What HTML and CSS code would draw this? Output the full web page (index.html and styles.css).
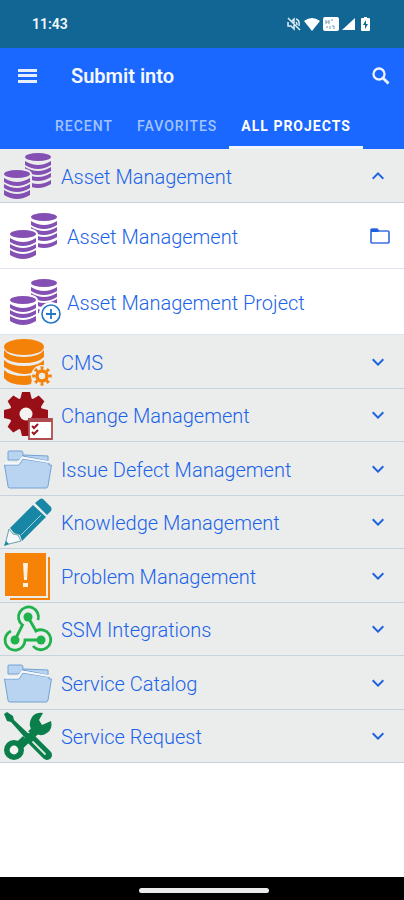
FILE: index.html
```html
<!DOCTYPE html>
<html lang="en">
<head>
<meta charset="utf-8">
<meta name="viewport" content="width=device-width, initial-scale=1">
<title>Submit into</title>
<link rel="stylesheet" href="styles.css">
</head>
<body>
<svg class="defs" width="0" height="0" aria-hidden="true">
  <symbol id="asset" viewBox="0 0 48 48" overflow="visible">
    <g fill="#8450b4">
      <ellipse cx="34" cy="5" rx="13" ry="4"/>
      <path d="M21 9Q34 17 47 9V13Q34 21 21 13zM21 15Q34 23 47 15V19Q34 27 21 19zM21 21Q34 29 47 21V25Q34 33 21 25zM21 28Q34 36 47 28V32Q34 40 21 32z"/>
    </g>
    <g fill="#8450b4">
      <path class="halo" d="M-1 22Q-1 16 13 16T28 22V44Q13 52 -1 44z"/>
      <ellipse cx="13" cy="22" rx="13" ry="4"/>
      <path d="M0 26Q13 34 26 26V30Q13 38 0 30zM0 32Q13 40 26 32V36Q13 44 0 36zM0 38Q13 46 26 38V43Q13 51 0 43z"/>
    </g>
  </symbol>
  <symbol id="folders" viewBox="0 0 48 48">
    <g fill="#b9d4f1" stroke="#73a1d0" stroke-width="1" stroke-linejoin="round">
      <path d="M4 15V7Q4 6 5 6H17Q19 6 19 8V10L16 14Q15 15 13 15H5zM20 10L44 11V16L19 11z"/>
      <path d="M.5 20H15L19 14L45 18V20H47.500L44 41Q43.500 43 42 43H6Q4 43 4 41z"/>
    </g>
    <path d="M1 18.500H14L18 12.500L45 17" fill="none" stroke="#f5f8fb" stroke-width="2"/>
  </symbol>
  <symbol id="down" viewBox="0 0 24 24"><path d="M7.400 8.600L12 13.200 16.600 8.600 18 10 12 16 6 10z"/></symbol>
</svg>

<div class="status">
  <span>11:43</span>
  <div class="status-icons">
    <svg width="14" height="14" viewBox="0 0 14 14" fill="none" stroke="#dfedf3" stroke-width="1.500"><path d="M1 1L13 13M1 5V9H4L7 12V8M5 4L7 2V6M9 5Q10 6 10 8M9 2Q13 3 12 9"/></svg>
    <svg width="16" height="14" viewBox="0 0 16 14"><path fill="#fff" d="M0 4Q8-2 16 4L8 14z"/></svg>
    <svg width="16" height="14" viewBox="0 0 16 14"><rect width="16" height="14" rx="2" fill="#fff"/><path d="M3 3V7M3 5H6M6 3V7M8 3H10M3 10H5M7 9V12M9 9H11V12" stroke="#6f9fb5" fill="none"/></svg>
    <svg width="13" height="14" viewBox="0 0 13 14"><path fill="#fff" d="M13 1V13H0z"/></svg>
    <svg class="battery" width="9" height="14" viewBox="0 0 9 14"><path fill="#fff" d="M3 0H6V1H8Q9 1 9 2V13Q9 14 8 14H1Q0 14 0 13V2Q0 1 1 1H3z"/><path fill="#116694" d="M5 3L2 8H4V12L7 7H5z"/></svg>
  </div>
</div>

<header>
  <div class="appbar">
    <button class="icon-button" aria-label="Menu"><svg width="20" height="16" viewBox="0 0 20 16"><path fill="#e7efff" d="M0 1H19V4H0zM0 6H19V9H0zM0 12H19V15H0z"/></svg></button>
    <h1>Submit into</h1>
    <button class="icon-button" aria-label="Search"><svg width="18" height="18" viewBox="0 0 18 18" fill="none" stroke="#edf3ff"><circle cx="7" cy="7" r="5.500" stroke-width="2.300"/><path d="M11 11L16.500 16.500" stroke-width="2.800"/></svg></button>
  </div>
  <nav class="tabs">
    <button>RECENT</button>
    <button>FAVORITES</button>
    <button class="active" aria-current="page">ALL PROJECTS</button>
  </nav>
</header>

<main>
  <button class="row group" aria-expanded="true">
    <svg class="icon"><use href="#asset"/></svg><span>Asset Management</span>
    <svg class="chevron open"><use href="#down"/></svg>
  </button>
  <button class="row project">
    <svg class="icon"><use href="#asset"/></svg><span>Asset Management</span>
    <svg class="folder" width="20" height="16" viewBox="0 0 20 16"><path d="M1 14V2Q1 1 2 1H7L9 3H18Q19 3 19 4V14Q19 15 18 15H2Q1 15 1 14z" fill="none" stroke="#3d70e0" stroke-width="1.700"/><path d="M1 1H7L9 4H1z" fill="#1c5edc"/></svg>
  </button>
  <button class="row project">
    <svg class="icon" viewBox="0 0 48 48"><use href="#asset" width="48" height="48"/><circle cx="41" cy="36" r="12" fill="#fff"/><circle cx="41" cy="36" r="9" fill="#fff" stroke="#2377c8" stroke-width="1.600"/><path d="M36 36H46M41 31V41" stroke="#2377c8" stroke-width="1.800"/></svg><span>Asset Management Project</span>
  </button>
  <button class="row group">
    <svg class="icon" viewBox="0 0 48 48"><g fill="#f58208"><ellipse cx="20" cy="9" rx="20" ry="8"/><path d="M0 12Q5 19 20 19T40 12V19Q34 25 20 25T0 19zM0 22Q6 28 20 28T40 22V27L35 31Q29 36 20 36T0 29zM0 32Q6 38 20 38L29 37L27 46Q24 47 20 47Q5 47 0 40z"/></g><circle cx="38" cy="38" r="9" fill="none" stroke="#ebeded" stroke-width="4"/><circle cx="38" cy="38" r="5" fill="none" stroke="#f58208" stroke-width="3.500"/><circle cx="38" cy="38" r="8" fill="none" stroke="#f58208" stroke-width="3.500" pathLength="80" stroke-dasharray="4.500 5.500" stroke-dashoffset="2.250"/></svg><span>CMS</span>
    <svg class="chevron"><use href="#down"/></svg>
  </button>
  <button class="row group">
    <svg class="icon" viewBox="0 0 48 48"><g fill="#990f18"><circle cx="22" cy="23" r="16.500"/><path id="teeth" d="M18 1H26L28 9V37L26 45H18L16 37V9z"/><use href="#teeth" transform="rotate(45 22 23)"/><use href="#teeth" transform="rotate(90 22 23)"/><use href="#teeth" transform="rotate(135 22 23)"/></g><circle cx="22" cy="23" r="6.500" fill="#f3f3f2"/><path d="M25 28H48V48H25z" fill="#fff" stroke="#b04d50" stroke-width="1.800"/><path d="M24 27H48V31H24z" fill="#ae4b50"/><path d="M28 35L30 37L34 33M28 41L30 43L34 39" fill="none" stroke="#9b1820" stroke-width="2"/></svg><span>Change Management</span>
    <svg class="chevron"><use href="#down"/></svg>
  </button>
  <button class="row group">
    <svg class="icon"><use href="#folders"/></svg><span>Issue Defect Management</span>
    <svg class="chevron"><use href="#down"/></svg>
  </button>
  <button class="row group">
    <svg class="icon" viewBox="0 0 48 48"><path d="M36 1Q38 0 39 1L47 9Q48 11 47 13L43 17L31 5zM29 7L42 19L18 43L16 37L10 35L6 30z" fill="#1787a5"/><path d="M5 31L9 36L14 37L17 43L1 47z" fill="#f5f8f8" stroke="#65a3ad"/><path d="M2 43L5 46L0 48z" fill="#1787a5"/><path d="M17 37L37 17" stroke="#9bd1dc" stroke-width="1"/></svg><span>Knowledge Management</span>
    <svg class="chevron"><use href="#down"/></svg>
  </button>
  <button class="row group">
    <svg class="icon" viewBox="0 0 48 48"><path d="M1 1H42V44H1z" fill="#f78208"/><path d="M44 5H46V48H6V46H44z" fill="#f78208"/><path d="M19 11H24L23 28H20zM19 31H24V35H19z" fill="#fff2df"/></svg><span>Problem Management</span>
    <svg class="chevron"><use href="#down"/></svg>
  </button>
  <button class="row group">
    <svg class="icon" viewBox="0 0 48 48"><g fill="none" stroke="#20b24b" stroke-width="2.800"><path d="M34 15A10 10 0 1 0 18.500 20L11 35M7 26A10 10 0 1 0 21 35H37M29 41A10 10 0 1 0 32 26L24 12"/></g><g fill="#20b24b"><circle cx="24" cy="12" r="4.500"/><circle cx="11" cy="35" r="4.500"/><circle cx="37" cy="35" r="4.500"/></g></svg><span>SSM Integrations</span>
    <svg class="chevron"><use href="#down"/></svg>
  </button>
  <button class="row group">
    <svg class="icon"><use href="#folders"/></svg><span>Service Catalog</span>
    <svg class="chevron"><use href="#down"/></svg>
  </button>
  <button class="row group">
    <svg class="icon" viewBox="0 0 48 48"><path d="M15 34L33 17" stroke="#0a7e4b" stroke-width="9"/><circle cx="10" cy="38" r="7.200" fill="#f3f3f2" stroke="#0a7e4b" stroke-width="5.600"/><path d="M39 1L35 8L38 13L47 9Q49 17 43 21Q36 26 29 20Q23 13 28 5Q32 0 39 1z" fill="#0a7e4b"/><path d="M7 7L24 24" stroke="#ebeded" stroke-width="7"/><path d="M0 2L3 0L9 4L10 8L27 24L23 28L7 10L3 9z" fill="#0a7e4b"/><path d="M26 26L43 43" stroke="#0a7e4b" stroke-width="10" stroke-linecap="round"/><path d="M29 30L41 42" stroke="#d9e9e1" stroke-width="1.800" stroke-linecap="round"/></svg><span>Service Request</span>
    <svg class="chevron"><use href="#down"/></svg>
  </button>
</main>

<footer><div class="handle"></div></footer>
</body>
</html>
```
FILE: styles.css
```css
* { box-sizing: border-box; }

body {
  margin: 0;
  min-height: 100vh;
  display: flex;
  flex-direction: column;
  background: #fff;
  font-family: Roboto, "Liberation Sans", sans-serif;
}

button {
  border: 0;
  padding: 0;
  background: none;
  font: inherit;
  color: inherit;
  cursor: pointer;
}

svg { flex: none; display: block; }
.defs { position: absolute; }

.status {
  height: 48px;
  padding: 0 34px 0 32px;
  display: flex;
  align-items: center;
  justify-content: space-between;
  background: #116694;
  color: #f3f8fb;
  font-size: 14px;
  font-weight: 600;
}

.status-icons { display: flex; align-items: center; gap: 3px; }
.battery { margin-left: 3px; }

header { background: #1a68ff; color: #f5f8ff; }

.appbar {
  height: 56px;
  padding: 0 14px 0 18px;
  display: flex;
  align-items: center;
}

h1 {
  flex: 1;
  margin: 0 0 0 33px;
  font-size: 20px;
  line-height: 24px;
  font-weight: 600;
}

.tabs {
  height: 45px;
  padding-left: 43px;
  display: flex;
}

.tabs button {
  padding: 2px 12px 0;
  border-bottom: 3px solid transparent;
  color: #a3c3ff;
  font-size: 14px;
  font-weight: 500;
  letter-spacing: 1px;
}

.tabs .active { color: #fff; border-bottom-color: #f2f5fb; font-weight: 700; }

main { flex: 1; display: flex; flex-direction: column; }

.row {
  display: flex;
  align-items: center;
  gap: 9px;
  color: #1b63e8;
  font-size: 20px;
  font-weight: 350;
  line-height: 24px;
  text-align: left;
}

.row span { flex: 1; padding-top: 2px; }

.group {
  --surface: #ebeded;
  height: 54px;
  padding: 0 14px 0 4px;
  background: var(--surface);
  border-bottom: 1px solid #c6d3df;
}

.group:nth-child(odd) { height: 53px; }
.group:first-child { height: 54px; }

.project {
  --surface: #fff;
  height: 66px;
  padding: 0 14px 0 10px;
  background: var(--surface);
  border-bottom: 1px solid #dfe4ec;
}

.icon { width: 48px; height: 48px; overflow: visible; }
.halo { fill: var(--surface); }
.chevron { width: 24px; height: 24px; fill: #1f64df; }
.open { transform: rotate(180deg); }

footer {
  height: 23px;
  padding-left: 4px;
  display: flex;
  align-items: center;
  justify-content: center;
  background: #000;
}

.handle { width: 130px; height: 5px; margin-top: 4px; border-radius: 3px; background: #ebebeb; }
```
